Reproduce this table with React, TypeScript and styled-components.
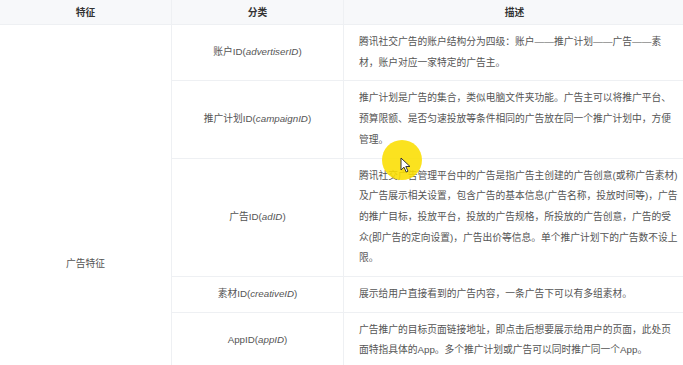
import React from 'react'
import styled, { createGlobalStyle } from 'styled-components'

const GlobalStyle = createGlobalStyle`
  html, body {
    margin: 0;
    padding: 0;
    background: #fff;
    overflow: hidden;
  }
  body {
    font-family: "Liberation Sans", "Noto Sans CJK SC", sans-serif;
  }
`

const line = '#eef0f3'

const Page = styled.div`
  position: relative;
  width: 683px;
`

const Table = styled.table`
  width: 683px;
  border-collapse: collapse;
  table-layout: fixed;
  font-size: 9.75px;
  color: #555;
`

const HeadCell = styled.th<{ $w: number }>`
  width: ${(p) => p.$w}px;
  height: 24px;
  padding: 0;
  background: #f7f8fa;
  color: #333;
  font-weight: bold;
  text-align: center;
  border-left: 1px solid ${line};
  border-bottom: 1px solid ${line};

  &:first-child {
    border-left: none;
  }
`

const FeatureCell = styled.td`
  text-align: center;
  vertical-align: middle;
  color: #555;
  border-bottom: 1px solid ${line};
`

const TypeCell = styled.td`
  text-align: center;
  vertical-align: middle;
  padding: 7px 6px;
  line-height: 20.7px;
  border-left: 1px solid ${line};
  border-bottom: 1px solid ${line};

  i {
    font-style: italic;
  }
`

const DescCell = styled.td`
  padding: 7px 5px 7px 15px;
  line-height: 20.7px;
  border-left: 1px solid ${line};
  border-bottom: 1px solid ${line};
`

const Spot = styled.div`
  position: absolute;
  left: 382px;
  top: 140px;
  width: 40px;
  height: 40px;
  border-radius: 50%;
  background: rgba(250, 222, 0, 0.88);
`

const Cursor = styled.svg`
  position: absolute;
  left: 400px;
  top: 157px;
`

type Row = { name: string; id: string; desc: string }

const rows: Row[] = [
  {
    name: '账户ID',
    id: 'advertiserID',
    desc: '腾讯社交广告的账户结构分为四级：账户——推广计划——广告——素材，账户对应一家特定的广告主。',
  },
  {
    name: '推广计划ID',
    id: 'campaignID',
    desc: '推广计划是广告的集合，类似电脑文件夹功能。广告主可以将推广平台、预算限额、是否匀速投放等条件相同的广告放在同一个推广计划中，方便管理。',
  },
  {
    name: '广告ID',
    id: 'adID',
    desc: '腾讯社交广告管理平台中的广告是指广告主创建的广告创意(或称广告素材)及广告展示相关设置，包含广告的基本信息(广告名称，投放时间等)，广告的推广目标，投放平台，投放的广告规格，所投放的广告创意，广告的受众(即广告的定向设置)，广告出价等信息。单个推广计划下的广告数不设上限。',
  },
  {
    name: '素材ID',
    id: 'creativeID',
    desc: '展示给用户直接看到的广告内容，一条广告下可以有多组素材。',
  },
  {
    name: 'AppID',
    id: 'appID',
    desc: '广告推广的目标页面链接地址，即点击后想要展示给用户的页面，此处页面特指具体的App。多个推广计划或广告可以同时推广同一个App。',
  },
  {
    name: '定向ID',
    id: 'targetingID',
    desc: '定向是广告主为广告设置的目标受众条件，包含年龄、性别、地域、学历、兴趣爱好、消费能力等多个维度，同一个定向可以被多个广告同时复用，广告主可以在定向包中统一管理和修改这些条件。',
  },
  {
    name: '版位ID',
    id: 'siteSetID',
    desc: '广告展示的具体位置，例如微信朋友圈、QQ空间、腾讯新闻、腾讯视频等流量平台中的广告位。',
  },
]

const App = () => (
  <Page>
    <GlobalStyle />
    <Table>
      <thead>
        <tr>
          <HeadCell $w={171}>特征</HeadCell>
          <HeadCell $w={171}>分类</HeadCell>
          <HeadCell $w={341}>描述</HeadCell>
        </tr>
      </thead>
      <tbody>
        {rows.map((r, i) => (
          <tr key={r.id}>
            {i === 0 && <FeatureCell rowSpan={rows.length}>广告特征</FeatureCell>}
            <TypeCell>
              {r.name}(<i>{r.id}</i>)
            </TypeCell>
            <DescCell>{r.desc}</DescCell>
          </tr>
        ))}
      </tbody>
    </Table>
    <Spot />
    <Cursor width="11" height="16" viewBox="0 0 11 16">
      <path
        d="M1 1 L1 13 L4 10.2 L6.2 15 L8 14.2 L5.8 9.5 L10 9.5 Z"
        fill="#fff"
        stroke="#333"
        strokeWidth="1"
        strokeLinejoin="round"
      />
    </Cursor>
  </Page>
)

export default App
